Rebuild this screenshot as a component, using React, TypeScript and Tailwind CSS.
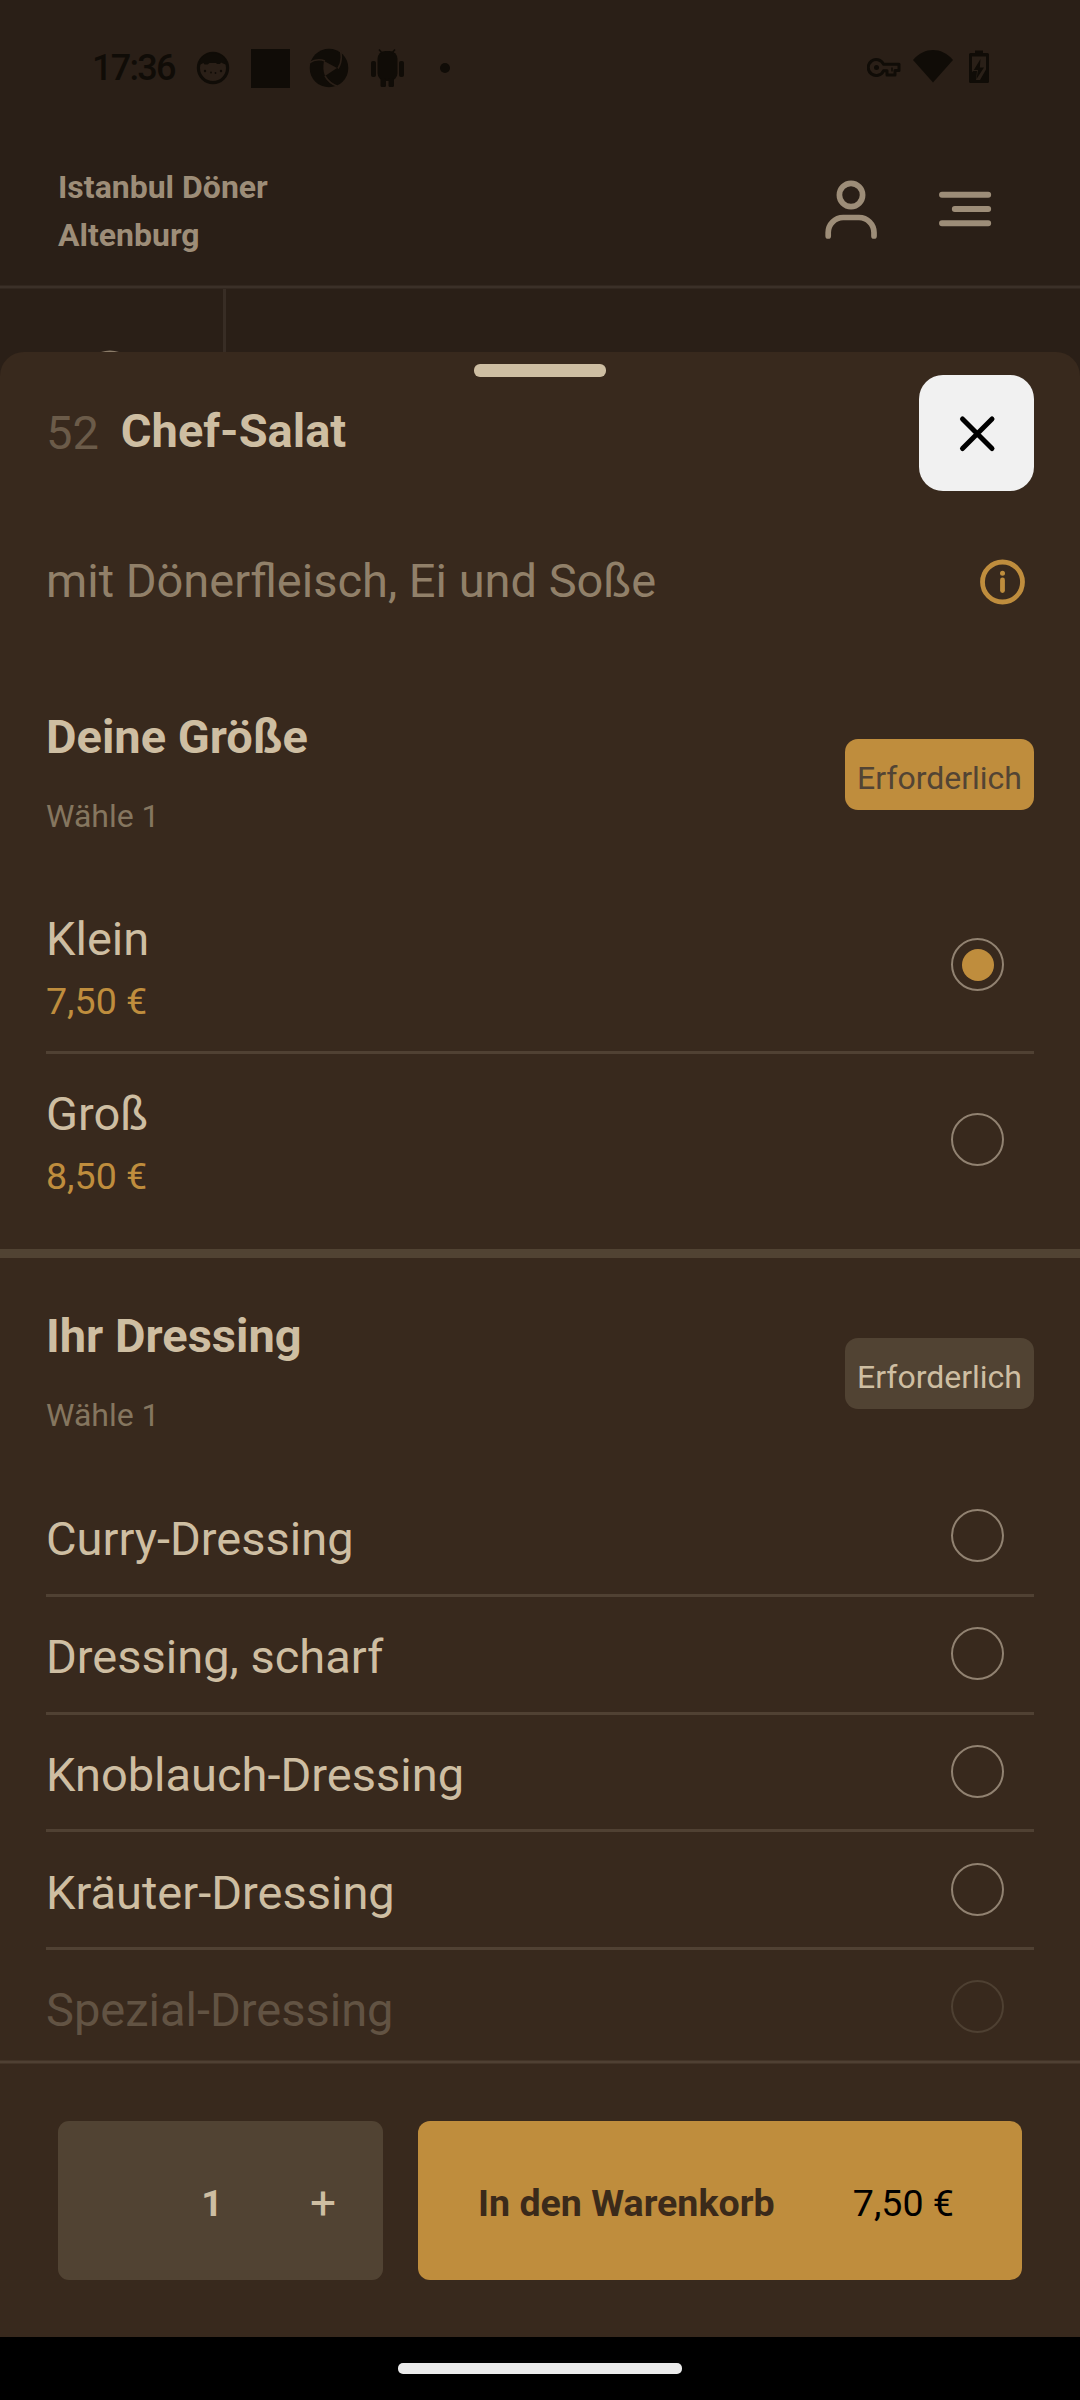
import React from "react";

const DRESSINGS = ["Curry-Dressing", "Dressing, scharf", "Knoblauch-Dressing", "Kräuter-Dressing"];

function StatusBar() {
  return (
    <div className="flex h-[136px] items-center justify-between pl-[92px] pr-[91px] text-[#100c07]">
      <div className="flex items-center">
        <span className="w-[101px] text-[36px] font-medium leading-[40px] tracking-[-1.7px]">17:36</span>
        <svg width="40" height="40" viewBox="0 0 40 40">
          <circle cx="20" cy="20" r="14.6" fill="none" stroke="currentColor" strokeWidth="3.2" />
          <path
            d="M6 17C7 9 13 5 20 5s13 4 14 12l-4-1.500-2-1-1 1.500h-3l-1-1-1.500 0-5 0-2 1.500h-3l-1-1.500-2 1z"
            fill="currentColor"
          />
          <g fill="currentColor">
            <circle cx="12" cy="23" r="1.200" />
            <circle cx="28" cy="23" r="1.200" />
            <circle cx="18" cy="24.500" r="0.900" />
            <circle cx="22.500" cy="25" r="0.900" />
          </g>
        </svg>
        <div className="ml-[18px] h-[39px] w-[39px] bg-current" />
        <svg className="ml-[19px]" width="40" height="40" viewBox="0 0 40 40">
          <circle cx="20" cy="20" r="19.300" fill="currentColor" />
          <path d="M15 13l13 7-12 8c-2-5-2-10-1-15z" fill="#2a1f17" />
          <path d="M0 15c6-4 11-4 16-2M31.500 3c1.500 6 1 12-2.500 17.500M16 28c3 5 6 8 12 10" fill="none" stroke="#2a1f17" strokeWidth="1.600" />
        </svg>
        <svg className="ml-[20px]" width="36" height="40" viewBox="0 0 36 40">
          <g fill="currentColor">
            <rect x="8.500" y="3" width="20" height="30" rx="8" />
            <rect x="2" y="13" width="5" height="16" rx="2" />
            <rect x="30" y="13" width="5" height="16" rx="2" />
            <rect x="11.500" y="30" width="5.500" height="9" rx="1.500" />
            <rect x="19.500" y="30" width="5.500" height="9" rx="1.500" />
          </g>
          <path d="M10 1.500l3 3.500M26 1.500l-3 3.500" stroke="currentColor" strokeWidth="1.600" />
        </svg>
        <div className="ml-[35px] h-[10px] w-[10px] rounded-full bg-current" />
      </div>
      <div className="flex items-center">
        <svg width="34" height="40" viewBox="0 0 34 40" fill="none" stroke="currentColor" strokeWidth="3">
          <path d="M16.500 16.200A8 8 0 1 0 16.500 22.800H20v4.200h8v-4.500h4v-6.300z" strokeLinejoin="round" />
          <path d="M25 19.500v4" strokeWidth="1.500" />
          <circle cx="9.500" cy="19.500" r="2.500" fill="currentColor" stroke="none" />
        </svg>
        <svg className="ml-[12px]" width="40" height="40" viewBox="0 0 40 40">
          <path d="M0 12C6 5 13 2 20 2s14 3 20 10L20 34.500z" fill="currentColor" />
        </svg>
        <svg className="ml-[16px]" width="20" height="40" viewBox="0 0 20 40">
          <path d="M0 6.500a1.500 1.500 0 0 1 1.500-1.500H6V2.500h8V5h4.500A1.500 1.500 0 0 1 20 6.500v27a1.500 1.500 0 0 1-1.500 1.500h-17A1.500 1.500 0 0 1 0 33.500z" fill="currentColor" />
          <path d="M3 8.500h14v13L11 32H7l1-9H4.500L3 24z" fill="#2a2018" />
          <path d="M11.500 11L4.800 22H9l-1.500 9L15 19.500h-4.200z" fill="currentColor" />
        </svg>
      </div>
    </div>
  );
}

function Header() {
  return (
    <header className="flex h-[149px] justify-between pl-[58px] pr-[88px] text-[#9d8d78]">
      <h1 className="mt-[27px] text-[32px] font-bold leading-[48px]">
        Istanbul Döner
        <br />
        Altenburg
      </h1>
      <div className="mt-[41px] flex h-[64px] gap-[60px]">
        <svg width="64" height="64" viewBox="0 0 64 64" fill="none" stroke="currentColor" strokeWidth="5.700" strokeLinecap="round">
          <circle cx="37" cy="18" r="11.600" />
          <path d="M14.200 59V55.500A15 15 0 0 1 29.200 40.500H45A15 15 0 0 1 60 55.500V59" />
        </svg>
        <svg width="54" height="64" viewBox="0 0 54 64" fill="none" stroke="currentColor" strokeWidth="5.900" strokeLinecap="round">
          <path d="M4 17.800H50.200M16.800 32H50.200M4 46.200H50.200" />
        </svg>
      </div>
    </header>
  );
}

function Radio({ checked = false, dim = false }: { checked?: boolean; dim?: boolean }) {
  return (
    <span
      className={
        dim
          ? "mr-[30px] flex h-[53px] w-[53px] items-center justify-center rounded-full border-2 border-[#4e4032]"
          : "mr-[30px] flex h-[53px] w-[53px] items-center justify-center rounded-full border-2 border-[#918271]"
      }
    >
      {checked && <span className="h-[32px] w-[32px] rounded-full bg-[#bf8d3d]" />}
    </span>
  );
}

function GroupHeading({ title, active = false }: { title: string; active?: boolean }) {
  return (
    <div className="flex h-[131px] items-center justify-between">
      <div className="flex flex-col gap-[27px]">
        <h3 className="text-[47px] font-bold leading-[56px] text-[#cebea2]">{title}</h3>
        <p className="text-[32px] leading-[48px] text-[#85765f]">Wähle 1</p>
      </div>
      <span
        className={
          active
            ? "flex h-[71px] w-[189px] items-center justify-center rounded-[13px] bg-[#bf8d3d] pt-[7px] text-[32px] text-[#524434]"
            : "flex h-[71px] w-[189px] items-center justify-center rounded-[13px] bg-[#514333] pt-[7px] text-[32px] text-[#cebea2]"
        }
      >
        Erforderlich
      </span>
    </div>
  );
}

function SizeOption({ name, price, checked = false }: { name: string; price: string; checked?: boolean }) {
  return (
    <>
      <div className="flex flex-col gap-[12px] pt-[5px]">
        <span className="text-[47px] leading-[56px] text-[#cebea2]">{name}</span>
        <span className="text-[37.6px] leading-[44px] text-[#bf8d3d]">{price}</span>
      </div>
      <Radio checked={checked} />
    </>
  );
}

function ItemSheet() {
  return (
    <section className="relative flex min-h-0 flex-1 flex-col rounded-t-[24px] bg-[#38291d]">
      <div className="absolute left-[474px] top-[11.5px] h-[13.5px] w-[132px] rounded-[6px] bg-[#cebea2]" />

      <div className="min-h-0 flex-1 overflow-hidden">
        <div className="px-[46px] pt-[23px]">
          <div className="flex h-[116px] items-center">
            <span className="text-[47px] leading-[60px] text-[#6b5b49]">52</span>
            <h2 className="ml-[22px] pb-1 text-[47px] font-bold leading-[60px] text-[#cebea2]">Chef-Salat</h2>
            <button className="ml-auto flex h-[116px] w-[115px] items-center justify-center rounded-[24px] bg-[#f1f1f1]">
              <svg width="40" height="40" viewBox="0 0 40 40" stroke="#000" strokeWidth="5" strokeLinecap="round">
                <path d="M5.500 6l29.500 29.500M35 6L5.500 35.500" />
              </svg>
            </button>
          </div>

          <div className="mt-[60px] flex h-[60px] items-center justify-between pr-[8px]">
            <p className="text-[47px] leading-[60px] text-[#918069]">mit Dönerfleisch, Ei und Soße</p>
            <svg width="47" height="47" viewBox="0 0 47 47" fill="none" stroke="#bf8d3d" strokeLinecap="round">
              <circle cx="23.500" cy="24" r="20" strokeWidth="4.800" />
              <path d="M23.500 22V32.500" strokeWidth="4.800" />
              <circle cx="23.500" cy="15.300" r="2.500" fill="#bf8d3d" stroke="none" />
            </svg>
          </div>
        </div>

        <div className="px-[46px] pb-[24px] pt-[98px]">
          <GroupHeading title="Deine Größe" active />
          <div className="mt-[38px] flex h-[176px] items-center justify-between border-b-[3px] border-[#504133]">
            <SizeOption name="Klein" price="7,50 €" checked />
          </div>
          <div className="flex h-[171px] items-center justify-between">
            <SizeOption name="Groß" price="8,50 €" />
          </div>
        </div>

        <div className="h-[9px] bg-[#514333]" />

        <div className="px-[46px] pt-[50px]">
          <GroupHeading title="Ihr Dressing" />
          <div className="mt-[40px]">
            {DRESSINGS.map((name) => (
              <div key={name} className="flex h-[117.75px] items-center justify-between border-b-[3px] border-[#504133] pb-[1px]">
                <span className="pt-[7px] text-[47px] leading-[56px] text-[#cebea2]">{name}</span>
                <Radio />
              </div>
            ))}
            <div className="flex h-[117.75px] items-center justify-between pb-[4px]">
              <span className="pt-[7px] text-[47px] leading-[56px] text-[#625343]">Spezial-Dressing</span>
              <Radio dim />
            </div>
          </div>
        </div>
      </div>

      <footer className="h-[277px] shrink-0">
        <div className="h-[4px] border-y border-[#433427] bg-[#4f4033]" />
        <div className="flex gap-[35px] px-[58px] pt-[57px] text-[37.6px]">
          <div className="flex h-[159px] w-[325px] items-center justify-end rounded-[11px] bg-[#514333] pt-[5px] text-[#cebea2]">
            <span className="w-[60px] text-center font-bold">1</span>
            <button className="ml-[51px] mr-[30px] w-[60px] text-center text-[46px]">+</button>
          </div>
          <button className="flex h-[159px] flex-1 items-center justify-between rounded-[12px] bg-[#bf8d3d] pl-[60px] pr-[68px] pt-[5px]">
            <span className="font-bold text-[#3b2a1a]">In den Warenkorb</span>
            <span className="text-black">7,50 €</span>
          </button>
        </div>
      </footer>
    </section>
  );
}

export default function App() {
  return (
    <div className="flex h-[2400px] w-[1080px] flex-col overflow-hidden bg-[#2a1f17] font-['Roboto',sans-serif]">
      <StatusBar />
      <Header />
      <div className="h-[4px] shrink-0 border-y border-[#32271f] bg-[#3b3028]" />
      <div className="flex h-[63px] shrink-0">
        <div className="flex w-[226px] items-end border-r-[3px] border-[#382d25] pl-[101px]">
          <svg width="18" height="2" viewBox="0 0 18 2">
            <path d="M0 2Q9 -1 18 2z" fill="#8a7b68" />
          </svg>
        </div>
      </div>
      <ItemSheet />
      <nav className="flex h-[63px] shrink-0 items-center justify-center bg-black">
        <div className="h-[11px] w-[284px] rounded-[5px] bg-[#ebebeb]" />
      </nav>
    </div>
  );
}
